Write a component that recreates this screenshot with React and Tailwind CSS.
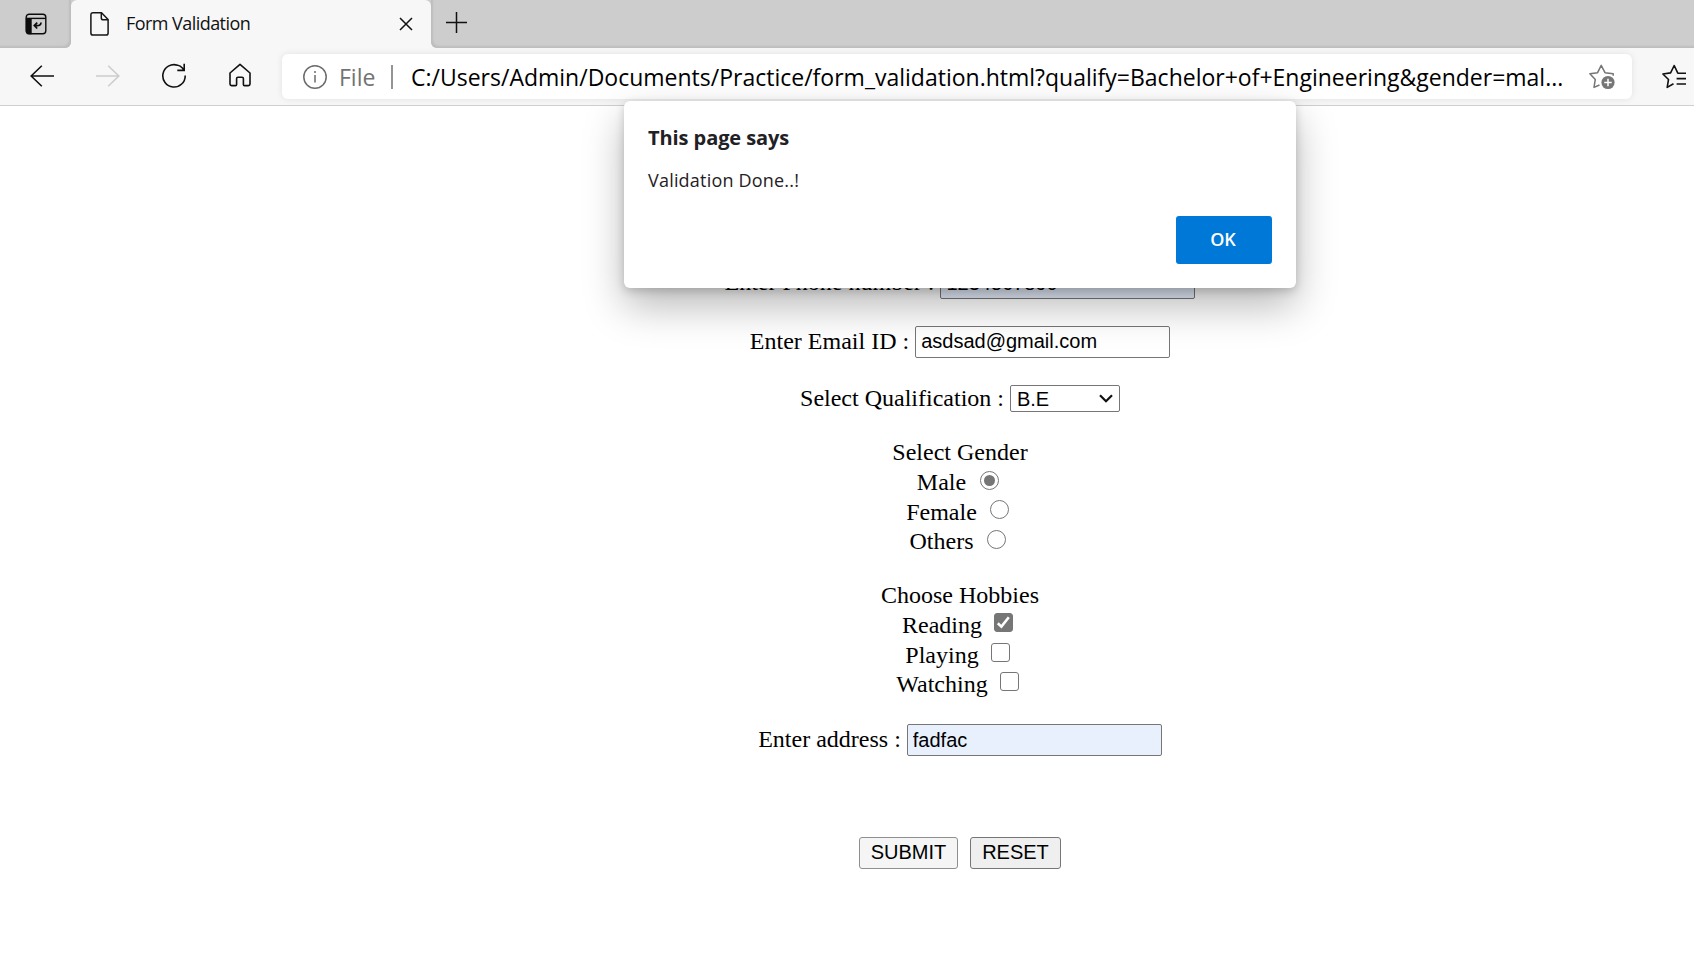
import React from "react";

const ui = "font-['Open_Sans','Noto_Sans',sans-serif]";
const arial = "font-['Liberation_Sans',sans-serif]";

function TabStrip() {
  return (
    <div className="flex h-12 bg-[#cdcdcd]">
      <div className="flex w-[71px] shrink-0 items-center bg-[#f7f7f7]">
        <div className="flex h-12 w-full items-center rounded-br-md bg-[#cdcdcd] pl-[25px] shadow-[inset_-2px_-2px_2px_#bdbdbd]">
          <svg className="-mt-[1px]" width="22" height="22" viewBox="0 0 22 22" fill="none" stroke="#0c0c0c" strokeWidth="1.4">
            <rect x="1.2" y="1.2" width="19.6" height="19.6" rx="3" />
            <path d="M1.2 5.4H20.8" />
            <path d="M1.5 5.6H6V20.6H4Q1.5 20.6 1.5 18Z" fill="#0c0c0c" />
            <path d="M16 9.4C16 11.6 15 12.6 12 12.6H9.4M12.2 9.7L9.3 12.6L12.2 15.5" strokeWidth="1.7" />
          </svg>
        </div>
      </div>
      <div className="flex h-12 w-[360px] shrink-0 items-center rounded-t-md bg-[#f7f7f7] pl-[19px]">
        <svg width="19" height="24" viewBox="0 0 19 24" fill="none" stroke="#161616" strokeWidth="1.5">
          <path d="M3 .8H11.5L18.1 7.5V21Q18.1 23.1 16 23.1H3Q.9 23.1 .9 21V3Q.9 .8 3 .8Z" />
          <path d="M11.3 1V6Q11.3 7.8 13.2 7.8H18" />
        </svg>
        <span className={`-mt-[2px] ml-[17px] w-[250px] text-[18px] leading-6 tracking-[-0.55px] text-[#111] ${ui}`}>Form Validation</span>
        <svg className="ml-[23px]" width="14" height="14" viewBox="0 0 14 14" stroke="#111" strokeWidth="1.5">
          <path d="M1 1L13 13M13 1L1 13" />
        </svg>
      </div>
      <div className="flex flex-1 bg-[#f7f7f7]">
        <div className="flex h-12 flex-1 items-center rounded-bl-md bg-[#cdcdcd] pl-[15px] shadow-[inset_2px_-2px_2px_#bdbdbd]">
          <svg className="-mt-[3px]" width="21" height="21" viewBox="0 0 21 21" stroke="#111" strokeWidth="1.5">
            <path d="M10.5 0V21M0 10.5H21" />
          </svg>
        </div>
      </div>
    </div>
  );
}

function Toolbar() {
  return (
    <div className="flex h-[58px] items-center border-b border-[#cfcfcf] bg-[#f7f7f7] pl-[30px]">
      <svg className="-mt-[2px] shrink-0" width="24" height="22" viewBox="0 0 24 22" fill="none" stroke="#111" strokeWidth="1.6">
        <path d="M11.8 .7L1.2 11L11.8 21.3M1.2 11H24" />
      </svg>
      <svg className="-mt-[2px] ml-[42px] shrink-0" width="24" height="22" viewBox="0 0 24 22" fill="none" stroke="#cdcdcd" strokeWidth="1.6">
        <path d="M12.2 .7L22.8 11L12.2 21.3M22.8 11H0" />
      </svg>
      <svg className="-mt-[1px] ml-[41px] shrink-0" width="26" height="26" viewBox="0 0 26 26" fill="none" stroke="#111" strokeWidth="1.6">
        <path d="M16.5 2.2A11.2 11.2 0 1 0 24.2 12.6M16.3 7.4H23.2V.8M23.2 7.4A11.2 11.2 0 0 0 13.2 1.7" />
      </svg>
      <svg className="-mt-[3px] ml-[41px] shrink-0" width="24" height="24" viewBox="0 0 24 24" fill="none" stroke="#111" strokeWidth="1.6" strokeLinejoin="round">
        <path d="M2 10L12 1.3L22 10V21Q22 22.6 20.4 22.6H16.5Q15.4 22.6 15.4 21.4V15.5Q15.4 14.2 14 14.2H10Q8.6 14.2 8.6 15.5V21.4Q8.6 22.6 7.5 22.6H3.6Q2 22.6 2 21Z" />
      </svg>
      <div className="ml-[30px] flex h-[45px] w-[1350px] shrink-0 items-center rounded-md bg-white pl-[21px] shadow-[0_0_7px_rgba(0,0,0,0.09)]">
        <svg className="shrink-0" width="24" height="24" viewBox="0 0 24 24" fill="none" stroke="#6b6b6b" strokeWidth="1.5">
          <circle cx="12" cy="12" r="11.2" />
          <path d="M12 10V17.5M12 6V8" />
        </svg>
        <span className={`ml-[12px] mt-[1px] w-[52px] text-[23px] leading-8 text-[#737373] ${ui}`}>File</span>
        <div className="h-6 w-[2px] bg-[#949494]" />
        <span className={`ml-[18px] mt-[1px] w-[1178px] whitespace-nowrap text-[23px] leading-8 text-black ${ui}`}>
          C:/Users/Admin/Documents/Practice/form_validation.html?qualify=Bachelor+of+Engineering&amp;gender=mal...
        </span>
        <svg className="shrink-0" width="26" height="26" viewBox="0 0 26 26" fill="none" stroke="#767676" strokeWidth="1.5" strokeLinejoin="round">
          <path d="M24.2 11.8V9.8L16 8.7L12.2 1.3L8.6 8.7L.9 9.8L6.3 15.4L5 23.4L10.5 21" />
          <circle cx="19" cy="18.5" r="6.6" fill="#767676" stroke="none" />
          <path d="M19 14.8V22.2M15.3 18.5H22.7" stroke="#fff" />
        </svg>
      </div>
      <svg className="ml-[30px] shrink-0" width="25" height="26" viewBox="0 0 25 26" fill="none" stroke="#111" strokeWidth="1.6" strokeLinejoin="round">
        <path d="M24 9.2H15.8L12.2 1.5L8.6 8.9L.9 10L6.5 15.5L5.2 23.4L11.5 19.8M14.6 14.6H24M14.6 20H24" />
      </svg>
    </div>
  );
}

function Field({ label, value, filled, className = "" }) {
  return (
    <label className={`flex h-8 items-center justify-center ${className}`}>
      <span className="-mt-[2px] mr-[6px] leading-8">{label}</span>
      <input
        readOnly
        value={value}
        className={`h-8 w-[255px] rounded-[2px] border border-[#767676] pl-[5px] text-[20px] leading-7 outline-none ${arial} ${filled ? "bg-[#e8f0fe]" : "bg-white pb-[2px]"}`}
      />
    </label>
  );
}

function Radio({ label, checked, row = "h-[30px]", mark = "mt-[4px]" }) {
  return (
    <div className={`flex justify-center ${row}`}>
      <span className="leading-[30px]">{label}</span>
      <span className={`ml-[13.5px] mr-[4.5px] flex size-[19px] items-center justify-center rounded-full border border-[#767676] bg-white ${mark}`}>
        {checked && <span className="size-[11px] rounded-full bg-[#767676]" />}
      </span>
    </div>
  );
}

function Check({ label, checked, row = "h-[29px]" }) {
  return (
    <div className={`flex justify-center ${row}`}>
      <span className="leading-[30px]">{label}</span>
      <span className={`ml-[12px] mr-[5px] mt-[3px] flex size-[19px] items-center justify-center rounded-[3px] border border-[#767676] ${checked ? "bg-[#767676]" : "bg-white"}`}>
        {checked && (
          <svg width="15" height="15" viewBox="0 0 15 15" fill="none" stroke="#fff" strokeWidth="2.6">
            <path d="M1.8 8.2L5.4 11.6L12.8 2.2" />
          </svg>
        )}
      </span>
    </div>
  );
}

function Dialog() {
  return (
    <div className={`absolute left-[624px] top-[101px] flex h-[187px] w-[672px] flex-col rounded-md bg-white px-6 pt-[21px] text-[#1f2124] shadow-[0_18px_40px_rgba(0,0,0,0.28),0_3px_10px_rgba(0,0,0,0.18)] ${ui}`}>
      <h1 className="text-[20px] font-bold leading-8 tracking-[-0.08px]">This page says</h1>
      <p className="mt-[14px] text-[18px] leading-6 tracking-[0.2px]">Validation Done..!</p>
      <button className="mt-[24px] h-12 w-24 self-end rounded-[3px] bg-[#0078d7] pb-[2px] pr-[2px] text-[18px] font-semibold leading-6 text-white">OK</button>
    </div>
  );
}

export default function App() {
  return (
    <div className="relative h-[955px] w-[1694px] overflow-hidden bg-white">
      <TabStrip />
      <Toolbar />
      <main className="ml-[226px] flex flex-col pt-[161px] font-['Liberation_Serif',serif] text-[24px] text-black">
        <Field label="Enter Phone number :" value="1234567890" filled />
        <Field className="mt-[27px]" label="Enter Email ID :" value="asdsad@gmail.com" />
        <div className="mt-[27px] flex h-[27px] items-center justify-center">
          <span className="mr-[6px] leading-[27px]">Select Qualification :</span>
          <div className={`flex h-[27px] w-[110px] items-center justify-between rounded-[2px] border border-[#767676] pl-[6px] pr-[6px] text-[20px] leading-6 ${arial}`}>
            <span>B.E</span>
            <svg width="14" height="9" viewBox="0 0 14 9" fill="none" stroke="#111" strokeWidth="2.2">
              <path d="M1 1.2L7 7.2L13 1.2" />
            </svg>
          </div>
        </div>
        <div className="mt-[25px] text-center leading-[30px]">Select Gender</div>
        <Radio label="Male" checked />
        <Radio label="Female" row="h-[29px]" mark="mt-[3px]" />
        <Radio label="Others" />
        <div className="mt-[24px] text-center leading-[30px]">Choose Hobbies</div>
        <Check label="Reading" checked row="h-[30px]" />
        <Check label="Playing" />
        <Check label="Watching" />
        <Field className="mt-[26px]" label="Enter address :" value="fadfac" filled />
        <div className={`mt-[81px] flex justify-center gap-3 text-[20px] ${arial}`}>
          <button className="h-8 w-[99px] rounded-[3px] border border-[#8f8f8f] bg-[#f5f5f5] pb-[2px] leading-7">SUBMIT</button>
          <button className="h-8 w-[91px] rounded-[3px] border border-[#767676] bg-[#efefef] pb-[2px] leading-7">RESET</button>
        </div>
      </main>
      <Dialog />
    </div>
  );
}
